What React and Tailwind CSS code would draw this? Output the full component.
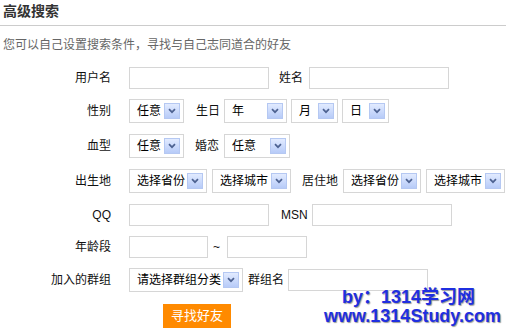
const font = "font-['Liberation_Sans','Noto_Sans_CJK_SC',sans-serif]";

function Arrow() {
  return (
    <span className="flex h-[16px] w-[16px] flex-shrink-0 items-center justify-center border border-[#b5c8f2] bg-gradient-to-b from-[#e2ebff] to-[#b7cbf8]">
      <svg width="8" height="6" viewBox="0 0 8 6">
        <path d="M1 1.2 L4 4.2 L7 1.2" fill="none" stroke="#4d6291" strokeWidth="1.7" />
      </svg>
    </span>
  );
}

function Select({ w, text }) {
  return (
    <div className={`flex h-[24px] flex-shrink-0 items-center justify-between border border-[#d6d6d6] bg-white pl-[7px] pr-[3px] text-[12px] text-black ${w}`}>
      <span className="whitespace-nowrap">{text}</span>
      <Arrow />
    </div>
  );
}

function Input({ w }) {
  return <div className={`h-[22px] flex-shrink-0 border border-[#d6d6d6] bg-white ${w}`} />;
}

function Row({ label, h, children }) {
  return (
    <div className={`flex items-center ${h}`}>
      <div className="w-[111px] flex-shrink-0 text-right text-[12px] text-[#111]">{label}</div>
      <div className="ml-[18px] flex items-center text-[12px] text-[#111]">{children}</div>
    </div>
  );
}

export default function App() {
  return (
    <div className={`relative h-[328px] w-[506px] overflow-hidden bg-white ${font}`}>
      {/* 标题 */}
      <div className="h-[26px] border-b border-[#cccccc] pl-[3px] pt-[1px]">
        <h2 className="text-[14px] font-bold leading-[20px] text-[#333]">高级搜索</h2>
      </div>
      <p className="h-[35px] pl-[3px] pt-[11px] text-[12px] leading-[16px] text-[#666]">
        您可以自己设置搜索条件，寻找与自己志同道合的好友
      </p>

      {/* 表单 */}
      <Row label="用户名" h="h-[33px]">
        <Input w="w-[140px]" />
        <span className="ml-[10px] w-[24px]">姓名</span>
        <span className="ml-[6px]"><Input w="w-[140px]" /></span>
      </Row>
      <Row label="性别" h="h-[34px]">
        <Select w="w-[55px]" text="任意" />
        <span className="ml-[12px] w-[24px]">生日</span>
        <span className="ml-[4px]"><Select w="w-[63px]" text="年" /></span>
        <span className="ml-[4px]"><Select w="w-[47px]" text="月" /></span>
        <span className="ml-[4px]"><Select w="w-[47px]" text="日" /></span>
      </Row>
      <Row label="血型" h="h-[35px]">
        <Select w="w-[55px]" text="任意" />
        <span className="ml-[11px] w-[24px]">婚恋</span>
        <span className="ml-[5px]"><Select w="w-[66px]" text="任意" /></span>
      </Row>
      <Row label="出生地" h="h-[36px]">
        <Select w="w-[78px]" text="选择省份" />
        <span className="ml-[5px]"><Select w="w-[79px]" text="选择城市" /></span>
        <span className="ml-[11px] w-[36px]">居住地</span>
        <span className="ml-[5px]"><Select w="w-[78px]" text="选择省份" /></span>
        <span className="ml-[5px]"><Select w="w-[79px]" text="选择城市" /></span>
      </Row>
      <Row label="QQ" h="h-[32px]">
        <Input w="w-[140px]" />
        <span className="ml-[12px] w-[27px]">MSN</span>
        <span className="ml-[4px]"><Input w="w-[140px]" /></span>
      </Row>
      <Row label="年龄段" h="h-[32px]">
        <Input w="w-[79px]" />
        <span className="ml-[5px] w-[8px]">~</span>
        <span className="ml-[6px]"><Input w="w-[80px]" /></span>
      </Row>
      <Row label="加入的群组" h="h-[34px]">
        <Select w="w-[114px]" text="请选择群组分类" />
        <span className="ml-[5px] w-[36px]">群组名</span>
        <span className="ml-[4px]"><Input w="w-[140px]" /></span>
      </Row>
      <div className="pl-[163px] pt-[6px]">
        <button className="h-[24px] w-[68px] bg-[#ff8a00] text-[13px] text-white">寻找好友</button>
      </div>

      {/* 水印 */}
      <div className="absolute left-[324px] top-[288px] font-['Liberation_Sans','Noto_Sans_CJK_SC',sans-serif] text-[18px] font-bold leading-[19px] text-[#1f2fe0] [text-shadow:1px_1px_1px_#9a9a9a]">
        <div className="pl-[18px]">by：1314学习网</div>
        <div>www.1314Study.com</div>
      </div>
    </div>
  );
}
